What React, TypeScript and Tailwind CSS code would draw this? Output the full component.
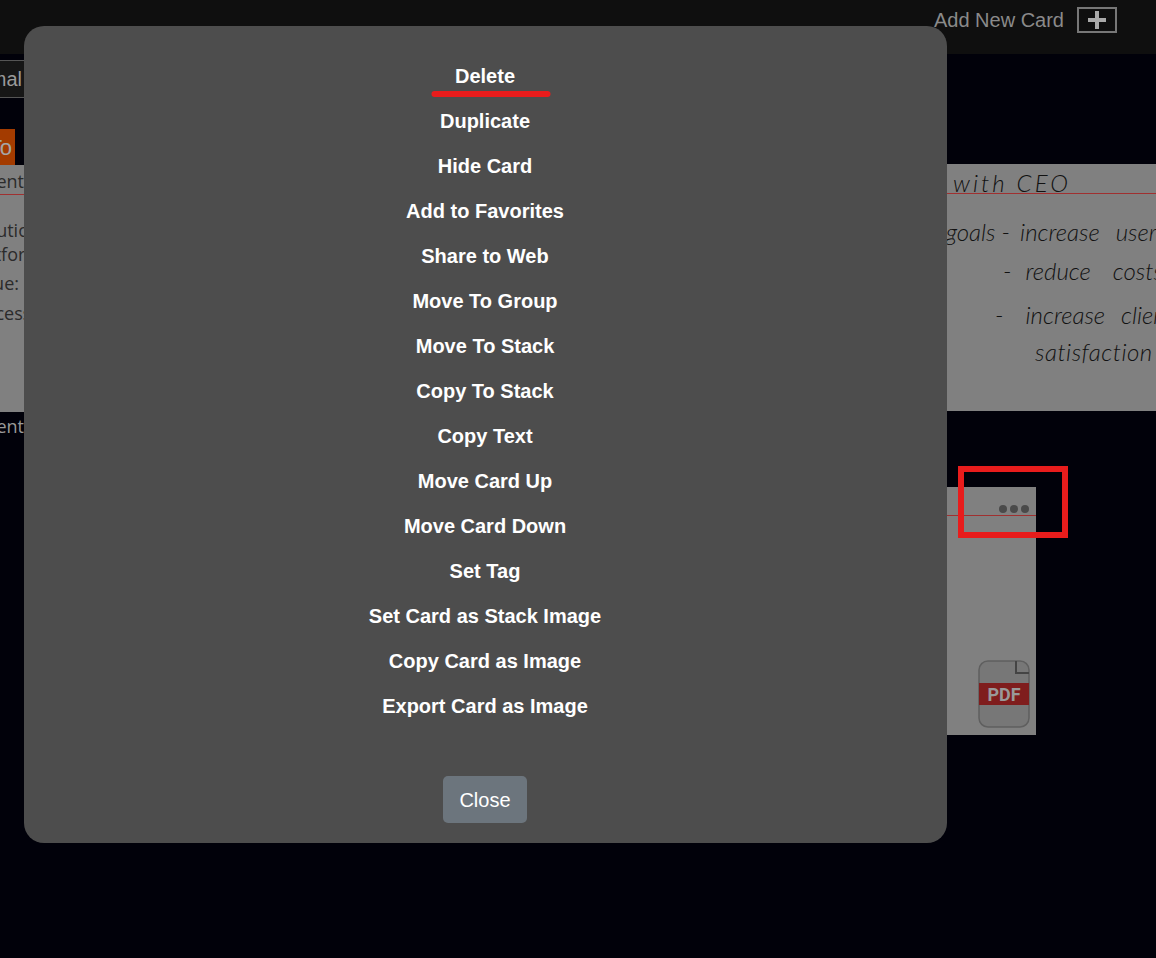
import React from 'react';

const menuItems = [
  'Delete',
  'Duplicate',
  'Hide Card',
  'Add to Favorites',
  'Share to Web',
  'Move To Group',
  'Move To Stack',
  'Copy To Stack',
  'Copy Text',
  'Move Card Up',
  'Move Card Down',
  'Set Tag',
  'Set Card as Stack Image',
  'Copy Card as Image',
  'Export Card as Image',
];

function PdfIcon() {
  return (
    <svg width="52" height="68" viewBox="0 0 52 68" className="block">
      <rect x="1" y="1" width="50" height="66" rx="9" fill="#777" stroke="#5f5f5f" strokeWidth="1.5" />
      <path d="M38 1 V13 H51" fill="none" stroke="#444" strokeWidth="2" />
      <rect x="1" y="23" width="50" height="22" fill="#7f1d1d" />
      <text
        x="26"
        y="41"
        textAnchor="middle"
        fontSize="18"
        fontWeight="700"
        fill="#999"
        fontFamily="Roboto, sans-serif"
      >
        PDF
      </text>
    </svg>
  );
}

function NotesCard() {
  return (
    <div className="flex h-[247px] w-[500px] flex-col bg-[#808080] font-['Lato',sans-serif] text-[24px] font-light italic leading-none whitespace-nowrap text-[#111]">
      <div className="h-[30px] border-b border-[#a03030] pl-[163px] pt-[7px] tracking-[3px]">with CEO</div>
      <div className="flex pl-[156px] pt-[26px]">
        <span>goals -</span>
        <span className="ml-[10px]">increase</span>
        <span className="ml-[16px]">user</span>
      </div>
      <div className="flex pl-[213px] pt-[15px]">
        <span>-</span>
        <span className="ml-[14px]">reduce</span>
        <span className="ml-[22px]">costs</span>
      </div>
      <div className="flex pl-[205px] pt-[20px]">
        <span>-</span>
        <span className="ml-[22px]">increase</span>
        <span className="ml-[16px]">client</span>
      </div>
      <div className="pl-[245px] pt-[13px] tracking-[0.5px]">satisfaction</div>
    </div>
  );
}

function SideColumn() {
  return (
    <div className="-ml-[276px] flex w-[300px] flex-col text-right font-['Open_Sans',sans-serif] text-[#2b2b2b]">
      <div className="-mr-[10px] mt-[6px] h-[38px] rounded-[3px] border border-[#555] bg-[#161616] pr-[11px] text-[20px] leading-[36px] font-['Liberation_Sans',sans-serif] text-[#9a9a9a]">
        Normal
      </div>
      <div className="mt-[31px] flex h-[36px] w-[291px] items-center justify-end overflow-hidden bg-[#a33b00] pr-[3px] font-['Liberation_Sans',sans-serif] text-[22px] text-[#a6a6a6]">
        To
      </div>
      <div className="h-[247px] bg-[#808080] text-[18px]">
        <div className="h-[30px] border-b border-[#a03030] leading-[32px]">Agent</div>
        <div className="-mr-[16px] mt-[23px] leading-[24px]">Solution</div>
        <div className="-mr-[18px] leading-[24px]">platform</div>
        <div className="mr-[5px] mt-[5px] leading-[24px]">Revenue:</div>
        <div className="-mr-[26px] mt-[6px] leading-[24px]">Processes</div>
      </div>
      <div className="mt-[2px] text-[18px] leading-[24px] text-[#999]">Agent</div>
    </div>
  );
}

export default function App() {
  return (
    <div className="relative h-[958px] w-[1156px] overflow-hidden bg-[#01010a] font-['Liberation_Sans',sans-serif]">
      <header className="flex h-[54px] items-center justify-end bg-[#0f0f0f] pb-[14px] pr-[39px]">
        <span className="text-[20px] text-[#8a8a8a]">Add New Card</span>
        <button className="ml-[13px] flex h-[26px] w-[40px] items-center justify-center border-2 border-[#777]">
          <svg width="18" height="18" viewBox="0 0 18 18">
            <path d="M7 0 h4 v7 h7 v4 h-7 v7 h-4 v-7 h-7 v-4 h7 Z" fill="#aaa" />
          </svg>
        </button>
      </header>

      <div className="flex justify-between">
        <SideColumn />
        <div className="ml-auto flex w-[366px] flex-col pt-[110px]">
          <NotesCard />
          <div className="mt-[76px] flex h-[248px] w-[246px] flex-col bg-[#808080]">
            <div className="flex h-[29px] items-center justify-end gap-[3px] border-b border-[#a03030] pr-[7px] pt-[16px]">
              <span className="h-[8px] w-[8px] rounded-full bg-[#4a4a4a]" />
              <span className="h-[8px] w-[8px] rounded-full bg-[#4a4a4a]" />
              <span className="h-[8px] w-[8px] rounded-full bg-[#4a4a4a]" />
            </div>
            <div className="mb-[7px] mr-[6px] mt-auto self-end">
              <PdfIcon />
            </div>
          </div>
        </div>
      </div>

      {/* annotation over the card menu */}
      <div className="absolute left-[958px] top-[466px] h-[72px] w-[110px] border-[6px] border-[#e81c1c]" />

      <div className="absolute left-[24px] top-[26px] flex h-[817px] w-[923px] flex-col items-center rounded-[20px] bg-[#4d4d4d] pr-[1px] pt-[28px]">
        {menuItems.map((item) => (
          <div key={item} className="relative h-[45px] text-[20px] font-bold leading-[45px] text-white">
            {item}
            {item === 'Delete' && (
              <span className="absolute left-1/2 top-[37px] ml-[6px] h-[6px] w-[119px] -translate-x-1/2 rounded-[3px] bg-[#e81c1c]" />
            )}
          </div>
        ))}
        <button className="mt-[47px] h-[47px] w-[84px] rounded-[5px] bg-[#6c757d] text-[20px] text-white">
          Close
        </button>
      </div>
    </div>
  );
}
